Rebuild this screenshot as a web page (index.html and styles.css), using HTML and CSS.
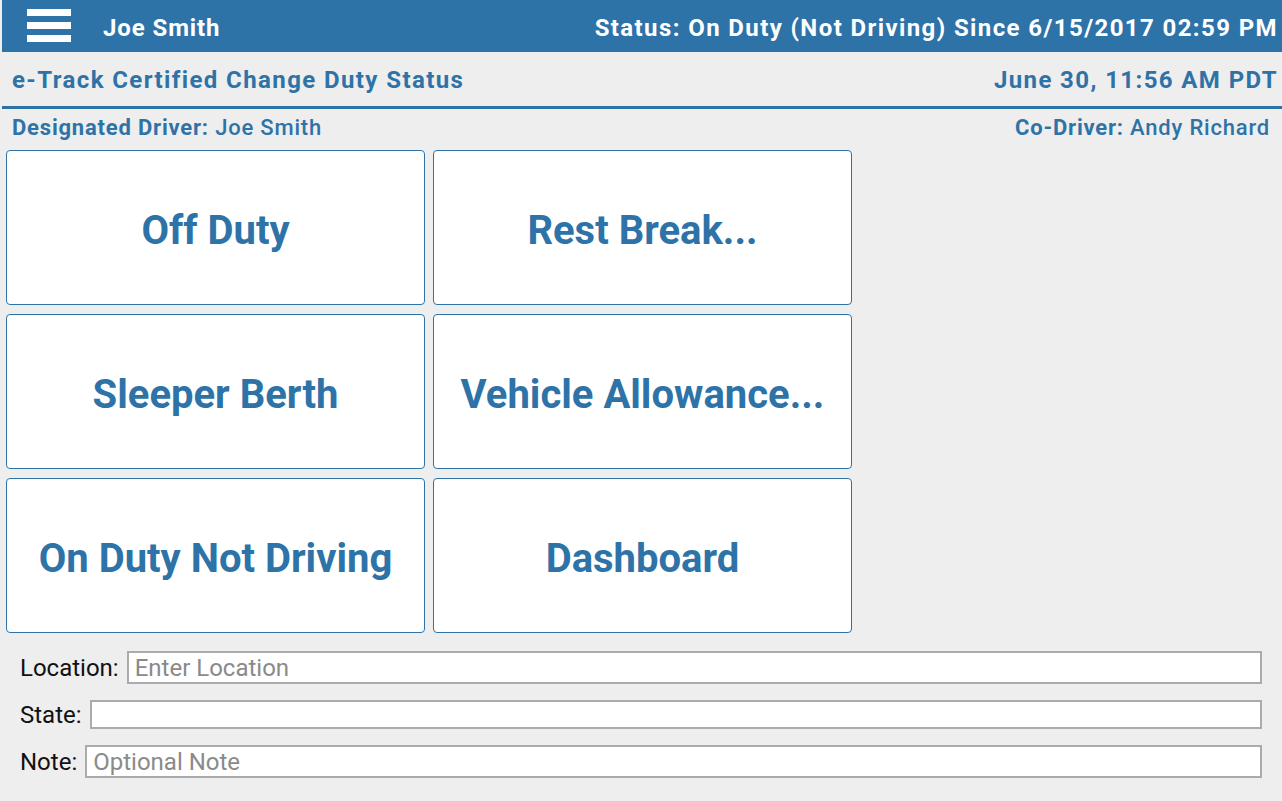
FILE: index.html
```html
<!DOCTYPE html>
<html>
<head>
    <title>e-Track Certified Change Duty Status</title>
    <link rel="stylesheet" href="styles.css">
</head>
<body>
    <div class="page">
        <div class="topbar">
            <div class="menu-icon">
                <span></span><span></span><span></span>
            </div>
            <div class="user-name">Joe Smith</div>
            <div class="status">Status: On Duty (Not Driving) Since 6/15/2017 02:59 PM</div>
        </div>

        <div class="titlebar">
            <div class="title">e-Track Certified Change Duty Status</div>
            <div class="clock">June 30, 11:56 AM PDT</div>
        </div>

        <div class="drivers">
            <div><b>Designated Driver:</b> Joe Smith</div>
            <div><b>Co-Driver:</b> Andy Richard</div>
        </div>

        <div class="duty-grid">
            <button class="duty-btn">Off Duty</button>
            <button class="duty-btn">Rest Break...</button>
            <button class="duty-btn">Sleeper Berth</button>
            <button class="duty-btn">Vehicle Allowance...</button>
            <button class="duty-btn">On Duty Not Driving</button>
            <button class="duty-btn">Dashboard</button>
        </div>

        <div class="details">
            <label class="field">
                <span>Location:</span>
                <input type="text" placeholder="Enter Location">
            </label>
            <label class="field">
                <span>State:</span>
                <input type="text" class="short">
            </label>
            <label class="field">
                <span>Note:</span>
                <input type="text" placeholder="Optional Note">
            </label>
        </div>
    </div>
</body>
</html>
```

FILE: styles.css
```css
body {
    margin: 0;
    background: #eeeeee;
    font-family: Roboto, "Noto Sans", Arial, sans-serif;
}
.page {
    margin-left: 2px;
    height: 801px;
    overflow: hidden;
}
.topbar {
    display: flex;
    align-items: center;
    height: 52px;
    background: #2e73a8;
    color: white;
    font-weight: bold;
    font-size: 24px;
    letter-spacing: 1.4px;
}
.menu-icon {
    display: flex;
    flex-direction: column;
    gap: 6px;
    width: 44px;
    margin-left: 25px;
    margin-bottom: 2px;
}
.menu-icon span {
    display: block;
    height: 7px;
    background: white;
}
.user-name {
    margin-left: 32px;
    flex: 1;
    letter-spacing: 0.9px;
    padding-top: 3px;
}
.status {
    margin-right: 4px;
    padding-top: 3px;
}
.titlebar {
    display: flex;
    justify-content: space-between;
    align-items: center;
    height: 57px;
    padding: 2px 4px 0 10px;
    box-sizing: border-box;
    border-bottom: 3px solid #2e73a8;
    color: #2e73a8;
    font-weight: bold;
    font-size: 24px;
    letter-spacing: 1.4px;
}
.drivers {
    display: flex;
    justify-content: space-between;
    padding: 6px 12px 0 10px;
    height: 35px;
    color: #2e73a8;
    font-size: 22px;
    font-weight: 500;
    letter-spacing: 0.8px;
}
.drivers b {
    font-weight: bold;
}
.duty-grid {
    display: grid;
    grid-template-columns: 419px 419px;
    grid-auto-rows: 155px;
    gap: 9px 8px;
    padding-left: 4px;
}
.duty-btn {
    background: white;
    border: 1px solid #2e73a8;
    border-radius: 4px;
    color: #2e73a8;
    font-family: Roboto, "Noto Sans", Arial, sans-serif;
    font-weight: bold;
    font-size: 40px;
    padding: 6px 0 0 0;
}
.details {
    display: flex;
    flex-direction: column;
    gap: 16px;
    padding: 18px 20px 0 18px;
}
.field {
    display: flex;
    align-items: center;
    gap: 8px;
    font-size: 24px;
    color: #111;
}
.field input {
    flex: 1;
    height: 29px;
    box-sizing: content-box;
    border: 2px solid #ababab;
    background: white;
    padding: 0 6px;
    font-family: Roboto, "Noto Sans", Arial, sans-serif;
    font-size: 24px;
    color: #333;
}
.field input.short {
    height: 25px;
}
.field input::placeholder {
    color: #8a8a8a;
}
```
